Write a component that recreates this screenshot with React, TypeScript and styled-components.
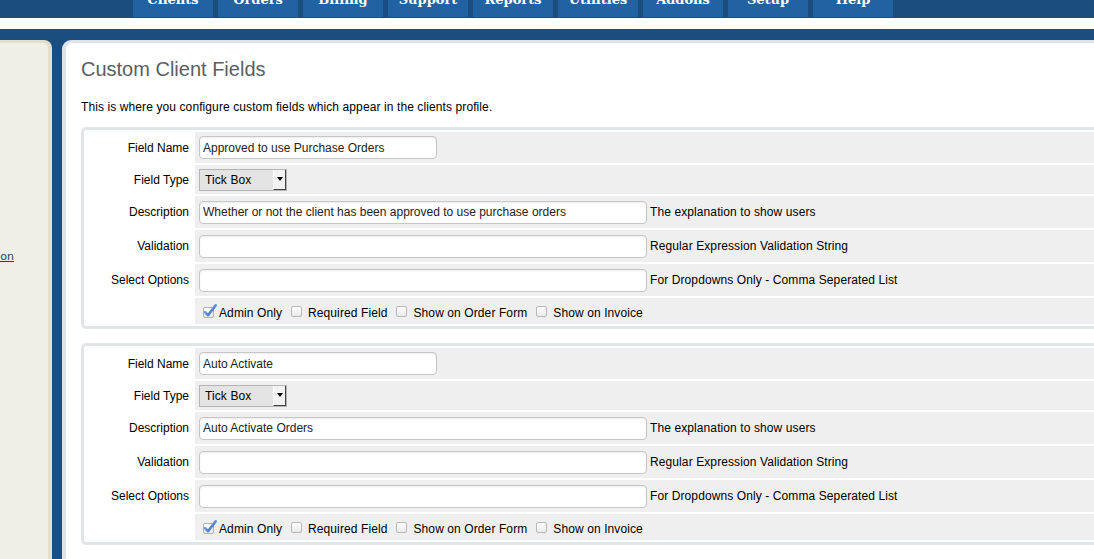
import React from "react";
import styled, { createGlobalStyle } from "styled-components";

const NAV_ITEMS = [
  "Clients",
  "Orders",
  "Billing",
  "Support",
  "Reports",
  "Utilities",
  "Addons",
  "Setup",
  "Help",
];

type FieldDef = {
  name: string;
  type: string;
  description: string;
  adminOnly: boolean;
};

const FIELDS: FieldDef[] = [
  {
    name: "Approved to use Purchase Orders",
    type: "Tick Box",
    description: "Whether or not the client has been approved to use purchase orders",
    adminOnly: true,
  },
  {
    name: "Auto Activate",
    type: "Tick Box",
    description: "Auto Activate Orders",
    adminOnly: true,
  },
];

const GlobalStyle = createGlobalStyle`
  html, body {
    margin: 0;
    padding: 0;
    overflow: hidden;
    background: #1b4d7e;
    font-family: "Liberation Sans", Arial, sans-serif;
  }
`;

const Header = styled.header`
  height: 30px;
  margin-top: -12px;
  background: #1b4d7e;
  border-bottom: 11px solid #fff;
  display: flex;
  align-items: flex-start;
  gap: 5px;
  padding-left: 133px;
`;

const Tab = styled.a`
  width: 80px;
  height: 29px;
  background: #2163a2;
  color: #fff;
  font-family: "DejaVu Serif", "Liberation Serif", serif;
  font-weight: bold;
  font-size: 13px;
  line-height: 24px;
  text-align: center;
  text-decoration: none;
`;

const Layout = styled.div`
  width: 1200px;
  padding-top: 11px;
  display: flex;
  gap: 10px;
  height: 560px;
`;

const Sidebar = styled.aside`
  width: 48px;
  flex-shrink: 0;
  background: #efefe7;
  border-top: 3px solid #e2dfcb;
  border-right: 4px solid #e2dfcb;
  border-top-right-radius: 8px;
  overflow: hidden;
  padding-top: 207px;
`;

const SideItem = styled.div`
  display: flex;
  justify-content: flex-end;
  padding-right: 34px;
  white-space: nowrap;
`;

const SideLink = styled.a`
  font-family: "DejaVu Sans", Verdana, sans-serif;
  font-size: 11px;
  color: #1d3f78;
  text-decoration: underline;
`;

const Panel = styled.main`
  flex: 1;
  background: #fff;
  border-top: 3px solid #dfe3e7;
  border-left: 4px solid #dfe3e7;
  border-top-left-radius: 9px;
  padding: 14px 15px 0 15px;
`;

const Title = styled.h1`
  margin: 0;
  font-size: 20px;
  line-height: 24px;
  font-weight: normal;
  color: #5a5e63;
`;

const Intro = styled.p`
  margin: 19px 0 13px;
  font-size: 12px;
  line-height: 14px;
  letter-spacing: 0.1px;
  color: #000;
`;

const FieldBox = styled.div`
  border: 3px solid #e1e5e8;
  border-radius: 5px;
  margin-bottom: 14px;
`;

const FieldTable = styled.table`
  width: 100%;
  border-collapse: separate;
  border-spacing: 2px;
`;

const Row = styled.tr<{ $h: number }>`
  height: ${(p) => p.$h}px;
`;

const LabelCell = styled.td`
  width: 103px;
  padding: 0 4px 0 0;
  text-align: right;
  font-size: 12px;
  color: #000;
  white-space: nowrap;
`;

const ValueCell = styled.td`
  background: #efefef;
  padding: 0 0 0 4px;
  font-size: 12px;
  letter-spacing: 0.1px;
  color: #000;
  white-space: nowrap;
`;

const TextInput = styled.input<{ $w: number }>`
  box-sizing: border-box;
  width: ${(p) => p.$w}px;
  height: 23px;
  border: 1px solid #c6c6c6;
  border-radius: 4px;
  padding: 0 3px;
  background: #fff;
  box-shadow: inset 0 1px 2px rgba(0, 0, 0, 0.08);
  font-family: "Liberation Sans", Arial, sans-serif;
  font-size: 12px;
  color: #222;
  vertical-align: middle;
  outline: none;
`;

const Help = styled.span`
  margin-left: 3px;
  vertical-align: middle;
`;

const Select = styled.div`
  box-sizing: border-box;
  display: inline-flex;
  align-items: center;
  justify-content: space-between;
  width: 88px;
  height: 22px;
  border: 1px solid #b4b4b4;
  background: #e4e4e4;
  padding-left: 5px;
  vertical-align: middle;
  font-size: 12px;
`;

const SelectButton = styled.span`
  box-sizing: border-box;
  width: 13px;
  height: 20px;
  background: #f2f2f2;
  border-left: 1px solid #fff;
  border-right: 1px solid #444;
  border-bottom: 1px solid #444;
  display: flex;
  align-items: center;
  justify-content: center;
`;

const Arrow = styled.span`
  width: 0;
  height: 0;
  border-left: 3px solid transparent;
  border-right: 3px solid transparent;
  border-top: 4px solid #000;
`;

const CheckCell = styled(ValueCell)`
  padding: 3px 0 0 5px;
`;

const Option = styled.label`
  display: inline-flex;
  align-items: center;
  margin-right: 6px;
  vertical-align: middle;
`;

const Box = styled.span`
  box-sizing: border-box;
  width: 11px;
  height: 11px;
  margin: 0 6px 0 3px;
  border: 1px solid #b8b8b8;
  border-radius: 2px;
  background: linear-gradient(#fff, #e9e9e9);
  position: relative;
  top: -1px;
`;

const CheckedBox = styled.svg`
  width: 15px;
  height: 14px;
  margin: 0 2px 0 2px;
  position: relative;
  top: -2px;
`;

const Check = ({ checked, label }: { checked: boolean; label: string }) => (
  <Option>
    {checked ? (
      <CheckedBox viewBox="0 0 15 14">
        <defs>
          <linearGradient id="cbg" x1="0" y1="0" x2="0" y2="1">
            <stop offset="0" stopColor="#ffffff" />
            <stop offset="1" stopColor="#e6e6e6" />
          </linearGradient>
          <linearGradient id="tick" x1="0" y1="0" x2="1" y2="1">
            <stop offset="0" stopColor="#8fb3e8" />
            <stop offset="1" stopColor="#2f62b5" />
          </linearGradient>
        </defs>
        <rect x="1.5" y="3.5" width="10" height="10" rx="1.5" fill="url(#cbg)" stroke="#b0b0b0" />
        <path d="M3 8.2 L6 11.2 L13.6 1.4" fill="none" stroke="url(#tick)" strokeWidth="2.6" strokeLinecap="round" strokeLinejoin="round" />
      </CheckedBox>
    ) : (
      <Box />
    )}
    {label}
  </Option>
);

const FieldEditor = ({ field }: { field: FieldDef }) => (
  <FieldBox>
    <FieldTable>
      <tbody>
        <Row $h={31}>
          <LabelCell>Field Name</LabelCell>
          <ValueCell>
            <TextInput $w={238} defaultValue={field.name} />
          </ValueCell>
        </Row>
        <Row $h={29}>
          <LabelCell>Field Type</LabelCell>
          <ValueCell>
            <Select>
              {field.type}
              <SelectButton>
                <Arrow />
              </SelectButton>
            </Select>
          </ValueCell>
        </Row>
        <Row $h={32}>
          <LabelCell>Description</LabelCell>
          <ValueCell>
            <TextInput $w={448} defaultValue={field.description} />
            <Help>The explanation to show users</Help>
          </ValueCell>
        </Row>
        <Row $h={32}>
          <LabelCell>Validation</LabelCell>
          <ValueCell>
            <TextInput $w={448} defaultValue="" />
            <Help>Regular Expression Validation String</Help>
          </ValueCell>
        </Row>
        <Row $h={32}>
          <LabelCell>Select Options</LabelCell>
          <ValueCell>
            <TextInput $w={448} defaultValue="" />
            <Help>For Dropdowns Only - Comma Seperated List</Help>
          </ValueCell>
        </Row>
        <Row $h={26}>
          <LabelCell />
          <CheckCell>
            <Check checked={field.adminOnly} label="Admin Only" />
            <Check checked={false} label="Required Field" />
            <Check checked={false} label="Show on Order Form" />
            <Check checked={false} label="Show on Invoice" />
          </CheckCell>
        </Row>
      </tbody>
    </FieldTable>
  </FieldBox>
);

const App = () => {
  return (
    <>
      <GlobalStyle />
      <Header>
        {NAV_ITEMS.map((item) => (
          <Tab key={item} href="#">
            {item}
          </Tab>
        ))}
      </Header>
      <Layout>
        <Sidebar>
          <SideItem>
            <SideLink href="#">Automation</SideLink>
          </SideItem>
        </Sidebar>
        <Panel>
          <Title>Custom Client Fields</Title>
          <Intro>
            This is where you configure custom fields which appear in the
            clients profile.
          </Intro>
          {FIELDS.map((f) => (
            <FieldEditor key={f.name} field={f} />
          ))}
        </Panel>
      </Layout>
    </>
  );
};

export default App;
